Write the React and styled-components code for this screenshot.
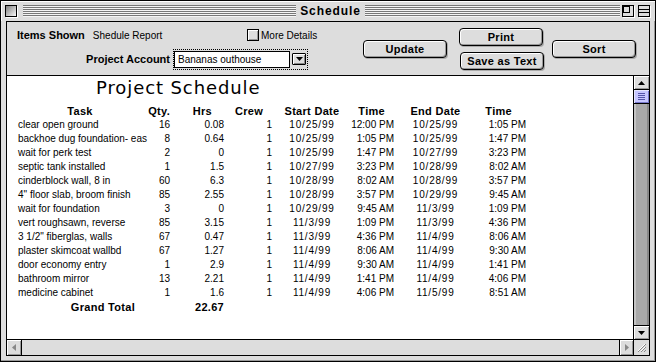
import React from "react";
import styled, { createGlobalStyle } from "styled-components";

const GlobalStyle = createGlobalStyle`
    html, body {
        margin: 0;
        padding: 0;
        background: #fff;
    }
    body {
        font-family: "Liberation Sans", Arial, sans-serif;
    }
`

const chicago = `"Liberation Sans", Arial, sans-serif`
const geneva = `"Liberation Sans", Arial, sans-serif`

const Window = styled.div`
    width: 656px;
    height: 362px;
    box-sizing: border-box;
    border: 1px solid #000;
    background: #dddddd;
    display: flex;
    flex-direction: column;
`

const TitleBar = styled.div`
    height: 20px;
    display: flex;
    align-items: center;
    padding: 0 4px;
    box-shadow: inset 1px 1px 0 #fff;
`

const Stripes = styled.div`
    flex: ${p => p.$left ? 273 : 255} 1 0;
    height: 11px;
    margin: ${p => p.$left ? "0 0 0 5px" : "0 2px 0 0"};
    background: repeating-linear-gradient(to bottom, #777 0 1px, #f4f4f4 1px 2px);
    border-bottom: 1px solid #f4f4f4;
`

const WindowTitle = styled.div`
    font-family: ${chicago};
    font-weight: bold;
    font-size: 12px;
    letter-spacing: 0.9px;
    padding: 0 4px;
    color: #000;
`

const BoxIcon = styled.svg`
    display: block;
    flex: none;
    margin-left: ${p => p.$gap || 0}px;
`

const Frame = styled.div`
    flex: 1;
    display: flex;
    padding: 0 5px 5px;
    box-shadow: inset -1px -1px 0 #999;
`

const Content = styled.div`
    flex: 1;
    display: flex;
    flex-direction: column;
    border: 1px solid #000;
    min-height: 0;
`

const Header = styled.div`
    height: 53px;
    display: flex;
    align-items: center;
    border-bottom: 1px solid #000;
    background: #dddddd;
`

const LeftBlock = styled.div`
    width: 356px;
    height: 53px;
    display: flex;
    flex-direction: column;
    padding-top: 1px;
    box-sizing: border-box;
`

const HeaderRow = styled.div`
    height: 24px;
    display: flex;
    align-items: center;
    padding-left: 10px;
`

const Label = styled.span`
    font-family: ${chicago};
    font-weight: bold;
    font-size: 11px;
    color: #000;
    white-space: nowrap;
    width: ${p => p.$width ? `${p.$width}px` : "auto"};
    text-align: ${p => p.$right ? "right" : "left"};
`

const InfoPair = styled.div`
    width: 230px;
    display: flex;
    align-items: center;
    gap: 8px;
`

const Value = styled.span`
    font-family: ${geneva};
    font-size: 10px;
    color: #000;
`

const CheckLabel = styled.label`
    display: flex;
    align-items: center;
    gap: 2px;
    font-family: ${geneva};
    font-size: 10px;
    color: #000;
`

const CheckBox = styled.span`
    width: 10px;
    height: 10px;
    border: 1px solid #000;
    background: #ddd;
    box-shadow: inset 1px 1px 0 #fff, inset -1px -1px 0 #999;
`

const FocusRing = styled.div`
    margin-left: 3px;
    display: flex;
    align-items: center;
    padding: 1px 1px 1px 0;
    border: 1px dotted #000;
    gap: 2px;
`

const Field = styled.div`
    height: 15px;
    border: 1px solid #000;
    background: #fff;
    font-family: ${geneva};
    font-size: 10px;
    line-height: 15px;
    padding-left: 3px;
    box-sizing: content-box;
    width: 111px;
`

const DropButton = styled.div`
    width: 12px;
    height: 10px;
    border: 1px solid #000;
    border-radius: 1px;
    background: #ddd;
    box-shadow: inset 1px 1px 0 #fff, inset -1px -1px 0 #888;
    display: flex;
    align-items: center;
    justify-content: center;
`

const Button = styled.button`
    width: 84px;
    height: 18px;
    padding: 0;
    margin: 0;
    margin-left: ${p => p.$gap || 0}px;
    border: 1px solid #000;
    border-radius: 4px;
    background: #dddddd;
    box-shadow: inset 1px 1px 0 #fff, inset -1px -1px 0 #999, 1px 1px 0 #aaa;
    font-family: ${chicago};
    font-weight: bold;
    font-size: 11px;
    letter-spacing: 0.3px;
    color: #000;
`

const ButtonStack = styled.div`
    display: flex;
    flex-direction: column;
    gap: 6px;
    margin-left: 12px;
    margin-top: 1px;

    button + button {
        margin-left: 1px;
    }
`

const Body = styled.div`
    height: 263px;
    display: flex;
    border-bottom: 1px solid #000;
`

const Report = styled.div`
    flex: 1;
    background: #fff;
    overflow: hidden;
    border-right: 1px solid #000;
`

const ReportTitle = styled.div`
    height: 28px;
    padding: 1px 0 0 89px;
    box-sizing: border-box;
    font-family: "DejaVu Sans", Verdana, sans-serif;
    font-size: 18px;
    letter-spacing: 0.9px;
    line-height: 22px;
    color: #000;
`

const cols = [
    { w: 124, align: "start", head: "center", pad: 0, kind: "text" },
    { w: 28, align: "end", head: "end", pad: 0, kind: "num" },
    { w: 54, align: "end", head: "end", pad: 12, kind: "num" },
    { w: 48, align: "end", head: "end", pad: 9, kind: "num" },
    { w: 80, align: "center", head: "center", pad: 0, kind: "date" },
    { w: 42, align: "end", head: "end", pad: 9, kind: "time" },
    { w: 83, align: "center", head: "center", pad: 0, kind: "date" },
    { w: 49, align: "end", head: "end", pad: 14, kind: "time" },
]

const Table = styled.div`
    display: grid;
    grid-template-columns: ${cols.map(c => `${c.w}px`).join(" ")};
    grid-auto-rows: 14px;
    padding-left: 11px;
`

const Cell = styled.div`
    justify-self: ${p => p.$align || "start"};
    font-family: ${geneva};
    font-size: 10px;
    letter-spacing: ${p => p.$kind === "date" ? "0.8px" : "0"};
    line-height: 14px;
    white-space: nowrap;
    color: #000;
`

const HeadCell = styled.div`
    justify-self: ${p => p.$align};
    padding-right: ${p => p.$pad || 0}px;
    font-family: ${chicago};
    font-weight: bold;
    font-size: 11px;
    letter-spacing: 0.3px;
    line-height: 14px;
    white-space: nowrap;
    color: #000;
`

const VScroll = styled.div`
    width: 15px;
    display: flex;
    flex-direction: column;
    background: #aaa;
`

const ArrowBox = styled.div`
    height: ${p => p.$h || 13}px;
    width: ${p => p.$w ? `${p.$w}px` : "auto"};
    flex: none;
    background: #dddddd;
    box-shadow: inset 1px 1px 0 #fff, inset -1px -1px 0 #999;
    display: flex;
    align-items: center;
    justify-content: center;
    border-top: ${p => p.$top ? "1px solid #000" : "none"};
    border-bottom: ${p => p.$bottom ? "1px solid #000" : "none"};
    border-left: ${p => p.$leftB ? "1px solid #000" : "none"};
    border-right: ${p => p.$rightB ? "1px solid #000" : "none"};
`

const Thumb = styled.div`
    height: 13px;
    flex: none;
    background: #c6c6ff;
    border-bottom: 1px solid #000;
    box-shadow: inset 1px 1px 0 #e6e6ff, inset -1px -1px 0 #7777cc;
    display: flex;
    align-items: center;
    justify-content: center;
`

const Grip = styled.div`
    width: 7px;
    height: 7px;
    background: repeating-linear-gradient(to bottom, #5555aa 0 1px, transparent 1px 2px);
`

const Track = styled.div`
    flex: 1;
    background: #a9a9a9;
    box-shadow: inset 2px 0 0 #c4c4c4, inset -2px 0 0 #888;
`

const HScroll = styled.div`
    height: 15px;
    display: flex;
    background: #dddddd;
`

const HTrack = styled.div`
    flex: 1;
    background: #dddddd;
`

const GrowBox = styled.div`
    width: 15px;
    flex: none;
    border-left: 1px solid #000;
    background: #dddddd;
    display: flex;
    align-items: center;
    justify-content: center;
`

function Arrow({ dir, color = "#000" }) {
    const pts = {
        up: "0,4 7,4 3.5,0",
        down: "0,0 7,0 3.5,4",
        left: "4,0 4,7 0,3.5",
        right: "0,0 0,7 4,3.5",
    }[dir]
    const vertical = dir === "up" || dir === "down"
    return (
        <svg width={vertical ? 7 : 4} height={vertical ? 4 : 7} viewBox={vertical ? "0 0 7 4" : "0 0 4 7"}>
            <polygon points={pts} fill={color} />
        </svg>
    )
}

const rows = [
    ["clear open ground", "16", "0.08", "1", "10/25/99", "12:00 PM", "10/25/99", "1:05 PM"],
    ["backhoe dug foundation- eas", "8", "0.64", "1", "10/25/99", "1:05 PM", "10/25/99", "1:47 PM"],
    ["wait for perk test", "2", "0", "1", "10/25/99", "1:47 PM", "10/27/99", "3:23 PM"],
    ["septic tank installed", "1", "1.5", "1", "10/27/99", "3:23 PM", "10/28/99", "8:02 AM"],
    ["cinderblock wall, 8 in", "60", "6.3", "1", "10/28/99", "8:02 AM", "10/28/99", "3:57 PM"],
    ["4\" floor slab, broom finish", "85", "2.55", "1", "10/28/99", "3:57 PM", "10/29/99", "9:45 AM"],
    ["wait for foundation", "3", "0", "1", "10/29/99", "9:45 AM", "11/3/99", "1:09 PM"],
    ["vert roughsawn, reverse", "85", "3.15", "1", "11/3/99", "1:09 PM", "11/3/99", "4:36 PM"],
    ["3 1/2\" fiberglas, walls", "67", "0.47", "1", "11/3/99", "4:36 PM", "11/4/99", "8:06 AM"],
    ["plaster skimcoat wallbd", "67", "1.27", "1", "11/4/99", "8:06 AM", "11/4/99", "9:30 AM"],
    ["door economy entry", "1", "2.9", "1", "11/4/99", "9:30 AM", "11/4/99", "1:41 PM"],
    ["bathroom mirror", "13", "2.21", "1", "11/4/99", "1:41 PM", "11/4/99", "4:06 PM"],
    ["medicine cabinet", "1", "1.6", "1", "11/4/99", "4:06 PM", "11/5/99", "8:51 AM"],
]

const headings = ["Task", "Qty.", "Hrs", "Crew", "Start Date", "Time", "End Date", "Time"]

export default function App() {
    return (
        <>
            <GlobalStyle />
            <Window>
                <TitleBar>
                    <BoxIcon width="13" height="13" viewBox="0 0 13 13">
                        <defs>
                            <linearGradient id="cb" x1="0" y1="0" x2="1" y2="1">
                                <stop offset="0" stopColor="#777" />
                                <stop offset="1" stopColor="#fff" />
                            </linearGradient>
                        </defs>
                        <rect x="0.5" y="0.5" width="11" height="11" fill="url(#cb)" stroke="#000" />
                        <line x1="12.5" y1="1" x2="12.5" y2="13" stroke="#fff" />
                        <line x1="1" y1="12.5" x2="13" y2="12.5" stroke="#fff" />
                    </BoxIcon>
                    <Stripes $left />
                    <WindowTitle>Schedule</WindowTitle>
                    <Stripes />
                    <BoxIcon width="13" height="13" viewBox="0 0 13 13">
                        <rect x="0.5" y="0.5" width="11" height="11" fill="#ddd" stroke="#000" />
                        <rect x="1.5" y="1.5" width="6" height="6" fill="#ddd" stroke="#000" />
                        <line x1="12.5" y1="1" x2="12.5" y2="13" stroke="#fff" />
                        <line x1="1" y1="12.5" x2="13" y2="12.5" stroke="#fff" />
                    </BoxIcon>
                    <BoxIcon $gap={3} width="13" height="13" viewBox="0 0 13 13">
                        <rect x="0.5" y="0.5" width="11" height="11" fill="#ddd" stroke="#000" />
                        <line x1="1" y1="4.5" x2="11" y2="4.5" stroke="#000" />
                        <line x1="1" y1="7.5" x2="11" y2="7.5" stroke="#000" />
                        <line x1="12.5" y1="1" x2="12.5" y2="13" stroke="#fff" />
                        <line x1="1" y1="12.5" x2="13" y2="12.5" stroke="#fff" />
                    </BoxIcon>
                </TitleBar>
                <Frame>
                    <Content>
                        <Header>
                            <LeftBlock>
                                <HeaderRow>
                                    <InfoPair>
                                        <Label>Items Shown</Label>
                                        <Value>Shedule Report</Value>
                                    </InfoPair>
                                    <CheckLabel>
                                        <CheckBox />
                                        More Details
                                    </CheckLabel>
                                </HeaderRow>
                                <HeaderRow>
                                    <Label $width={153} $right>Project Account</Label>
                                    <FocusRing>
                                        <Field>Bananas outhouse</Field>
                                        <DropButton>
                                            <Arrow dir="down" />
                                        </DropButton>
                                    </FocusRing>
                                </HeaderRow>
                            </LeftBlock>
                            <Button>Update</Button>
                            <ButtonStack>
                                <Button>Print</Button>
                                <Button>Save as Text</Button>
                            </ButtonStack>
                            <Button $gap={8}>Sort</Button>
                        </Header>
                        <Body>
                            <Report>
                                <ReportTitle>Project Schedule</ReportTitle>
                                <Table>
                                    {headings.map((h, i) => (
                                        <HeadCell key={"h" + i} $align={cols[i].head} $pad={cols[i].pad}>{h}</HeadCell>
                                    ))}
                                    {rows.map((r, ri) =>
                                        r.map((v, ci) => (
                                            <Cell key={ri + "-" + ci} $align={cols[ci].align} $kind={cols[ci].kind}>{v}</Cell>
                                        ))
                                    )}
                                    <HeadCell $align="end" $pad={7}>Grand Total</HeadCell>
                                    <Cell />
                                    <HeadCell $align="end">22.67</HeadCell>
                                </Table>
                            </Report>
                            <VScroll>
                                <ArrowBox $bottom>
                                    <Arrow dir="up" />
                                </ArrowBox>
                                <Thumb>
                                    <Grip />
                                </Thumb>
                                <Track />
                                <ArrowBox $top>
                                    <Arrow dir="down" />
                                </ArrowBox>
                            </VScroll>
                        </Body>
                        <HScroll>
                            <ArrowBox $h={15} $w={14} $rightB>
                                <Arrow dir="left" color="#888" />
                            </ArrowBox>
                            <HTrack />
                            <ArrowBox $h={15} $w={13} $leftB>
                                <Arrow dir="right" color="#888" />
                            </ArrowBox>
                            <GrowBox>
                                <svg width="11" height="11" viewBox="0 0 11 11">
                                    <g stroke="#888" strokeWidth="1">
                                        <line x1="10" y1="2" x2="2" y2="10" />
                                        <line x1="10" y1="5" x2="5" y2="10" />
                                        <line x1="10" y1="8" x2="8" y2="10" />
                                    </g>
                                    <g stroke="#fff" strokeWidth="1">
                                        <line x1="9" y1="2" x2="2" y2="9" />
                                        <line x1="9" y1="5" x2="5" y2="9" />
                                    </g>
                                </svg>
                            </GrowBox>
                        </HScroll>
                    </Content>
                </Frame>
            </Window>
        </>
    )
}
